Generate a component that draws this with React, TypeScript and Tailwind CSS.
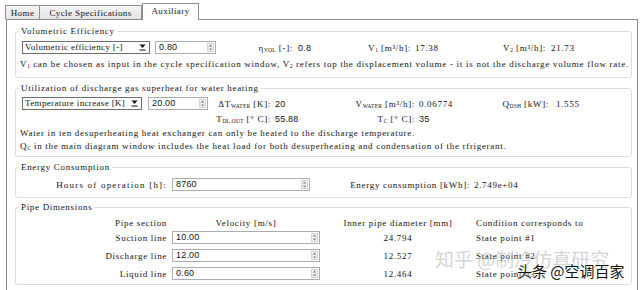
import type { ReactNode } from "react"

const SANS = "font-[family-name:'Liberation_Sans',Arial,sans-serif] tracking-[0.2px]"

function Combo({ text, width }: { text: string; width: string }) {
  return (
    <div className={`flex h-[13px] items-center border border-[#6f6f6f] bg-white ${width}`}>
      <span className="flex-1 overflow-hidden pl-[2px] leading-[11px] tracking-[0.35px]">{text}</span>
      <svg width="7" height="7" viewBox="0 0 7 7" className="mr-[3px] shrink-0">
        <polygon points="0.5,0.5 6.5,0.5 3.5,4" fill="#111" />
        <rect x="0.5" y="5.5" width="6" height="1" fill="#111" />
      </svg>
    </div>
  )
}

function Spin({ value, width }: { value: string; width: string }) {
  return (
    <div className={`flex h-[13px] items-center border border-[#abadb3] bg-white ${width}`}>
      <span className={`flex-1 pl-[3px] leading-[11px] ${SANS}`}>{value}</span>
      <div className="mr-[1px] flex h-[9px] w-[7px] items-center justify-center border border-[#d3d3d3] bg-[#f3f3f3]">
        <svg width="5" height="7" viewBox="0 0 5 7">
          <polygon points="2.5,0.5 4.5,2.5 0.5,2.5" fill="#8a8a8a" />
          <polygon points="0.5,4.5 4.5,4.5 2.5,6.5" fill="#8a8a8a" />
        </svg>
      </div>
    </div>
  )
}

function Group({ title, className, children }: { title: string; className: string; children: ReactNode }) {
  return (
    <div className={`relative w-[617px] rounded-[3px] border border-[#d5dfe5] ${className}`}>
      <span className="absolute -top-[7px] left-[3px] bg-white px-[2px] leading-[12px]">{title}</span>
      {children}
    </div>
  )
}

function Sub({ children }: { children: ReactNode }) {
  return <sub className="text-[5.5px] uppercase tracking-[0.2px]">{children}</sub>
}

const PIPES = [
  { name: "Suction line", velocity: "10.00", diameter: "24.794", state: "State point #1" },
  { name: "Discharge line", velocity: "12.00", diameter: "12.527", state: "State point #2" },
  { name: "Liquid line", velocity: "0.60", diameter: "12.464", state: "State point #3" },
]

export default function App() {
  return (
    <div className="relative h-[290px] w-[640px] overflow-hidden bg-white pt-[3px] font-[family-name:'Liberation_Serif',serif] text-[9px] leading-[12px] tracking-[0.68px] text-[#141414]">
      {/* tab strip */}
      <div className="flex h-[16px] items-end pl-[5px]">
        <div className="flex h-[14px] w-[35px] items-center justify-center border border-b-0 border-[#8e8f8f] bg-gradient-to-b from-[#f4f4f4] to-[#e4e4e4] tracking-[0.4px]">
          Home
        </div>
        <div className="flex h-[14px] w-[102px] items-center justify-center border border-b-0 border-l-0 border-[#8e8f8f] bg-gradient-to-b from-[#f4f4f4] to-[#e4e4e4] tracking-[0.4px]">
          Cycle Specifications
        </div>
        <div className="relative z-10 -mb-px flex h-[17px] w-[57px] items-center justify-center border border-b-0 border-[#8e8f8f] bg-white pb-[2px] tracking-[0.4px]">
          Auxiliary
        </div>
      </div>

      <div className="ml-[6px] h-[272px] w-[632px] border border-b-0 border-[#898c95] pl-[8px] pt-[11px]">
        <Group title="Volumetric Efficiency" className="pb-[7px] pt-[9px]">
          <div className="flex h-[13px] items-center whitespace-nowrap pl-[6px]">
            <Combo text="Volumetric efficiency [-]" width="w-[128px]" />
            <Spin value="0.80" width="ml-[5px] w-[61px]" />
            <span className="w-[77px] text-right">
              η<Sub>vol</Sub> [-]:
            </span>
            <span className={`w-[47px] pl-[5px] ${SANS}`}>0.8</span>
            <span className="w-[71px] text-right">
              V<Sub>1</Sub> [m³/h]:
            </span>
            <span className="w-[59px] pl-[4px]">17.38</span>
            <span className="w-[76px] text-right">
              V<Sub>2</Sub> [m³/h]:
            </span>
            <span className="pl-[5px]">21.73</span>
          </div>
          <p className="mt-[4px] whitespace-nowrap pl-[4px] tracking-[0.72px]">
            V<Sub>1</Sub> can be chosen as input in the cycle specification window, V<Sub>2</Sub> refers top the
            displacement volume - it is not the discharge volume flow rate.
          </p>
        </Group>

        <Group title="Utilization of discharge gas superheat for water heating" className="mt-[10px] pb-[3px] pt-[8px]">
          <div className="flex h-[13px] items-center whitespace-nowrap pl-[6px]">
            <Combo text="Temperature increase [K]" width="w-[120px]" />
            <Spin value="20.00" width="ml-[6px] w-[60px]" />
            <span className="w-[63px] text-right">
              ΔT<Sub>water</Sub> [K]:
            </span>
            <span className={`w-[64px] pl-[4px] ${SANS}`}>20</span>
            <span className="w-[80px] text-right">
              V<Sub>water</Sub> [m³/h]:
            </span>
            <span className="w-[74px] pl-[4px]">0.06774</span>
            <span className="w-[60px] text-right">
              Q<Sub>dsh</Sub> [kW]:
            </span>
            <span className="pl-[7px]">1.555</span>
          </div>
          <div className="mt-[3px] flex h-[12px] items-center whitespace-nowrap pl-[6px]">
            <span className="w-[186px]" />
            <span className="w-[63px] text-right">
              T<Sub>dl,out</Sub> [° C]:
            </span>
            <span className={`w-[64px] pl-[4px] ${SANS}`}>55.88</span>
            <span className="w-[80px] text-right">
              T<Sub>c</Sub> [° C]:
            </span>
            <span className={`pl-[4px] ${SANS}`}>35</span>
          </div>
          <div className="mt-[2px] whitespace-nowrap pl-[4px] leading-[13px]">
            <p>Water in ten desuperheating heat exchanger can only be heated to the discharge temperature.</p>
            <p>
              Q<Sub>c</Sub> in the main diagram window includes the heat load for both desuperheating and condensation
              of the rfrigerant.
            </p>
          </div>
        </Group>

        <Group title="Energy Consumption" className="mt-[10px] pb-[6px] pt-[10px]">
          <div className="flex h-[13px] items-center whitespace-nowrap">
            <span className="w-[151px] text-right tracking-[1.2px]">Hours of operation [h]:</span>
            <Spin value="8760" width="ml-[5px] w-[138px]" />
            <span className="w-[160px] text-right">Energy consumption [kWh]:</span>
            <span className="pl-[4px]">2.749e+04</span>
          </div>
        </Group>

        <Group title="Pipe Dimensions" className="mt-[9px] pb-[4px] pt-[9px]">
          <div className="flex h-[12px] items-center whitespace-nowrap">
            <span className="w-[151px] text-right">Pipe section</span>
            <span className="ml-[5px] w-[148px] text-center">Velocity [m/s]</span>
            <span className="w-[156px] text-center">Inner pipe diameter [mm]</span>
            <span>Condition corresponds to</span>
          </div>
          <div className="mt-[2px] flex flex-col gap-[5px]">
            {PIPES.map((pipe) => (
              <div key={pipe.name} className="flex h-[13px] items-center whitespace-nowrap">
                <span className="w-[151px] text-right">{pipe.name}</span>
                <Spin value={pipe.velocity} width="ml-[5px] w-[148px]" />
                <span className="w-[156px] text-center">{pipe.diameter}</span>
                <span>{pipe.state}</span>
              </div>
            ))}
          </div>
        </Group>
      </div>

      {/* watermarks */}
      <span className="absolute left-[435px] top-[247px] whitespace-nowrap font-[family-name:'Noto_Sans_CJK_SC',sans-serif] text-[19px] leading-[24px] tracking-normal text-[rgba(175,175,175,0.55)]">
        知乎 @制冷仿真研究
      </span>
      <span className="absolute left-[517px] top-[261px] whitespace-nowrap font-[family-name:'Noto_Sans_CJK_SC',sans-serif] text-[15px] leading-[20px] tracking-normal text-[#111] [text-shadow:0_0_2px_#fff,0_0_2px_#fff,0_0_1px_#fff]">
        头条 @空调百家
      </span>
    </div>
  )
}
